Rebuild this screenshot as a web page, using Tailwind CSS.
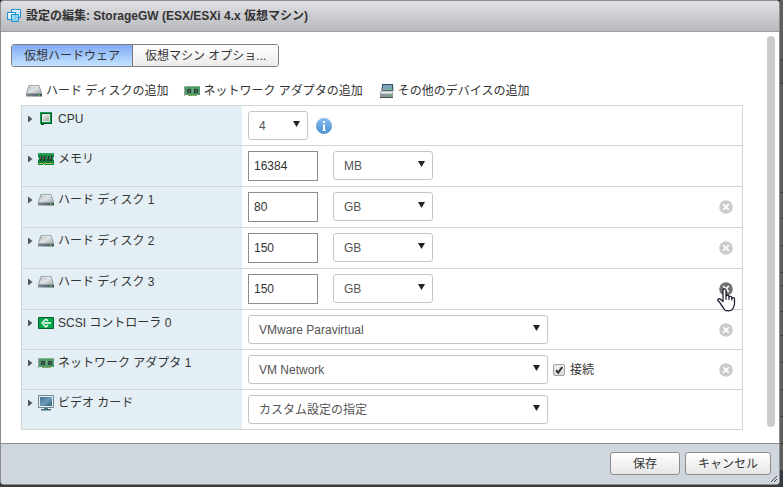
<!DOCTYPE html>
<html lang="ja">
<head>
<meta charset="utf-8">
<meta name="viewport" content="width=device-width, initial-scale=1">
<title>設定の編集</title>
<script src="https://cdn.jsdelivr.net/npm/@tailwindcss/browser@4"></script>
</head>
<body class="flex min-h-screen bg-[#3c3c3c] font-['Liberation_Sans','Noto_Sans_CJK_JP',sans-serif] text-xs text-[#333]">

<!-- Shared icons -->
<svg class="absolute size-0" aria-hidden="true">
  <defs>
    <linearGradient id="g-disk" x1="0" y1="0" x2="1" y2="1"><stop offset="0" stop-color="#aab1b5"/><stop offset=".5" stop-color="#dfe3e5"/><stop offset="1" stop-color="#a3abb0"/></linearGradient>
    <linearGradient id="g-base" x1="0" y1="0" x2="1" y2="0"><stop offset="0" stop-color="#7f8b92"/><stop offset="1" stop-color="#43525b"/></linearGradient>
    <linearGradient id="g-info" x1="0" y1="0" x2="0" y2="1"><stop offset="0" stop-color="#86bcf2"/><stop offset="1" stop-color="#4a8fd0"/></linearGradient>
    <linearGradient id="g-scr" x1="0" y1="0" x2="1" y2="1"><stop offset="0" stop-color="#3b6e90"/><stop offset=".5" stop-color="#6d9dbb"/><stop offset="1" stop-color="#2f5f80"/></linearGradient>
    <linearGradient id="g-chip" x1="0" y1="0" x2="1" y2="1"><stop offset="0" stop-color="#ecece9"/><stop offset="1" stop-color="#a3a4a2"/></linearGradient>
  </defs>
  <symbol id="i-disk" viewBox="0 0 16 16">
    <path d="M3 2.500h10l2.600 8H.4z" fill="url(#g-disk)" stroke="#828b90" stroke-width=".8"/>
    <path d="M3.600 3.300h8.800" stroke="#f2f4f5" stroke-width=".8"/>
    <path d="M0 10h16v3.600H0z" fill="url(#g-base)"/>
    <path d="M0 10.300h16" stroke="#c4cacd" stroke-width=".7"/>
    <path d="M12 11.400h1.600v1.400H12z" fill="#6fe04e"/>
  </symbol>
  <symbol id="i-cpu" viewBox="0 0 16 16">
    <path d="M2 1h12v12H6v1H3v-1H2z" fill="#065c29"/>
    <path d="M2 1h12v1H3v11H2z" fill="#1f9b51"/>
    <path d="M4 3h8v8H4z" fill="#d9f0df"/>
    <path d="M5 4h6v6H5z" fill="url(#g-chip)"/>
    <path d="M12 3h1v9H4v-1h8z" fill="#0f8f45"/>
  </symbol>
  <symbol id="i-mem" viewBox="0 0 16 16">
    <path d="M0 2h16v4l-1 1v1l1 1v5H6v-1H5v1H0V9l1-1V7L0 6z" fill="#0c8440"/>
    <path d="M0 2h16v2H0z" fill="#2e9d56"/>
    <path d="M2 5h2v5H2zM5 5h2v5H5zM9 5h2v5H9zM12 5h2v5h-2z" fill="#28352e"/>
    <path d="M2 5h1v3H2zM5 5h1v3H5zM9 5h1v3H9zM12 5h1v3h-1z" fill="#5c6961"/>
    <path d="M1 12.500h4M6 12.500h9" stroke="#b9c23f"/>
  </symbol>
  <symbol id="i-scsi" viewBox="0 0 16 16">
    <path d="M.5 2.500h15v11H.5z" fill="#00a84b" stroke="#075c2b"/>
    <path d="M8 4 4 8l4 4M8 4l2 2M8 12l2-2M6 8h7" fill="none" stroke="#fff" stroke-width="1.300"/>
  </symbol>
  <symbol id="i-net" viewBox="0 0 16 16">
    <path d="M1 3h15v9h-3v1H4v-1H1z" fill="#4f9a68"/>
    <path d="M1 3h15v1H1z" fill="#7fba8f"/>
    <path d="M0 3h1v10H0z" fill="#9aa69e"/>
    <path d="M3 6h4v4H3zM10 6h4v4h-4z" fill="#2c4a39"/>
    <path d="M4 7h2v2H4zM11 7h2v2h-2z" fill="#47604f"/>
    <path d="M8 5h1v5H8z" fill="#79aa87"/>
    <path d="M4 12.500h9" stroke="#b8bd5f" stroke-dasharray="1 1"/>
  </symbol>
  <symbol id="i-video" viewBox="0 0 16 16">
    <path d="M.5.500h15v12H.5z" fill="#e9eef0" stroke="#6d8796"/>
    <path d="M2 2h12v9H2z" fill="url(#g-scr)"/>
    <path d="M6 13h4v1H6z" fill="#4d7288"/><path d="M3 14h10v1.600H3z" fill="#40677f"/>
  </symbol>
  <symbol id="i-other" viewBox="0 0 16 16">
    <path d="M4 1h11l.5 7h-12z" fill="#2f4f62"/>
    <path d="M5 2h9v4H4.700z" fill="#7da3bb"/>
    <path d="M4 6.500h11" stroke="#a8bcc7" stroke-width=".8"/>
    <path d="M3 8h11l1 3H2z" fill="#e5e8e9" stroke="#89949a" stroke-width=".7"/>
    <path d="M2 11h13v4H2z" fill="#8d999f"/><path d="M2 14h13v1H2z" fill="#3e4f59"/>
    <path d="M11.500 5.600H13V7h-1.500zM11.500 12H13v1.400h-1.500z" fill="#35d83e"/>
  </symbol>
  <symbol id="i-x" viewBox="0 0 15 15">
    <circle cx="7.500" cy="7.500" r="7.300" fill="currentColor"/>
    <path d="m4.500 4.500 6 6m0-6-6 6" stroke="#fff" stroke-width="1.800"/>
  </symbol>
  <symbol id="i-tri" viewBox="0 0 5 8"><path d="M0 .5v7L4.500 4z" fill="#555"/></symbol>
  <symbol id="i-down" viewBox="0 0 7 6"><path d="M0 0h7L3.500 6z" fill="#222"/></symbol>
</svg>

<div role="dialog" aria-labelledby="title" class="mb-[2px] flex flex-1 flex-col overflow-hidden rounded-[4px] border border-[#8c8c8c] bg-white">
  <header class="flex h-[31px] items-center gap-1 border-b border-[#9c9da1] bg-linear-to-b from-[#e1e1e5] to-[#b8b9bd] pl-[5px]">
    <svg class="size-4" viewBox="0 0 16 16" aria-hidden="true">
      <g stroke="#1c8fd0"><path d="M5.500 1.500h9v8h-9z" fill="#c5e9fa"/><path d="M1.500 4.500h8v7h-8z" fill="#dff3fc" fill-opacity=".8"/><path d="M5.500 6.500h7v7h-7z" fill="#8fd4f6" fill-opacity=".8"/></g>
      <path d="M6 2.500h8M2 5.500h7" stroke="#fff"/>
    </svg>
    <h1 id="title" class="font-bold">設定の編集: StorageGW (ESX/ESXi 4.x 仮想マシン)</h1>
  </header>

  <div class="flex flex-1">
    <main class="flex-1 pt-3 pr-6 pl-[10px]">
      <div role="tablist" class="inline-flex h-[23px] overflow-hidden rounded-[3px] border border-[#7f7f7f] align-top">
        <button role="tab" aria-selected="true" class="border-r border-[#777] bg-linear-to-b from-[#82abf5] to-[#c3e4ff] px-3">仮想ハードウェア</button>
        <button role="tab" aria-selected="false" class="bg-linear-to-b from-white to-[#ebebeb] px-3">仮想マシン オプショ...</button>
      </div>

      <nav class="mt-3 mb-[2px] ml-[15px] flex h-6 items-center gap-[15px]">
        <a href="#" class="flex items-center gap-1"><svg class="size-4"><use href="#i-disk"/></svg>ハード ディスクの追加</a>
        <a href="#" class="flex items-center gap-1"><svg class="size-4"><use href="#i-net"/></svg>ネットワーク アダプタの追加</a>
        <a href="#" class="flex items-center gap-1"><svg class="size-4"><use href="#i-other"/></svg>その他のデバイスの追加</a>
      </nav>

      <div class="ml-[10px] divide-y divide-[#d3d5d6] border border-[#d3d5d6]">
        <div class="flex">
          <div class="flex w-[220px] items-start bg-[#e4eff5] pt-[5px] pl-[6px]"><span class="flex h-4 items-center gap-1"><svg class="mr-[1px] h-2 w-[5px]"><use href="#i-tri"/></svg><svg class="size-4"><use href="#i-cpu"/></svg><label for="cpu">CPU</label></span></div>
          <div class="flex flex-1 items-center py-[5px] pr-[9px] pl-[6px]">
            <span class="relative"><select id="cpu" class="block h-[29px] w-[60px] appearance-none rounded-[3px] border border-[#c6c6c6] bg-white pl-[10px] text-[#555]"><option>4</option></select><svg class="pointer-events-none absolute top-[10px] right-2 h-[6px] w-[7px]"><use href="#i-down"/></svg></span>
            <button aria-label="情報" class="ml-2"><svg class="size-4" viewBox="0 0 16 16"><circle cx="8" cy="8" r="7.800" fill="url(#g-info)" stroke="#5b9bd8" stroke-width=".4"/><path d="M7 3h2v2H7zM6.500 6.500H9V12h1v1H6.500v-1H7V7.500h-.5z" fill="#fff"/></svg></button>
          </div>
        </div>

        <div class="flex">
          <div class="flex w-[220px] items-start bg-[#e4eff5] pt-[5px] pl-[6px]"><span class="flex h-4 items-center gap-1"><svg class="mr-[1px] h-2 w-[5px]"><use href="#i-tri"/></svg><svg class="size-4"><use href="#i-mem"/></svg><label for="mem">メモリ</label></span></div>
          <div class="flex flex-1 items-start py-[5px] pr-[9px] pl-[6px]">
            <input id="mem" value="16384" class="mr-[15px] h-[30px] w-[70px] border border-[#8c8c8c] px-[5px]">
            <span class="relative"><select aria-label="メモリの単位" class="block h-[29px] w-[100px] appearance-none rounded-[3px] border border-[#c6c6c6] bg-white pl-[10px] text-[#555]"><option>MB</option></select><svg class="pointer-events-none absolute top-[10px] right-2 h-[6px] w-[7px]"><use href="#i-down"/></svg></span>
          </div>
        </div>

        <div class="flex">
          <div class="flex w-[220px] items-start bg-[#e4eff5] pt-[5px] pl-[6px]"><span class="flex h-4 items-center gap-1"><svg class="mr-[1px] h-2 w-[5px]"><use href="#i-tri"/></svg><svg class="size-4"><use href="#i-disk"/></svg><label for="hd1">ハード ディスク 1</label></span></div>
          <div class="flex flex-1 items-start py-[5px] pr-[9px] pl-[6px]">
            <input id="hd1" value="80" class="mr-[15px] h-[30px] w-[70px] border border-[#8c8c8c] px-[5px]">
            <span class="relative"><select aria-label="ハード ディスク 1 の単位" class="block h-[29px] w-[100px] appearance-none rounded-[3px] border border-[#c6c6c6] bg-white pl-[10px] text-[#555]"><option>GB</option></select><svg class="pointer-events-none absolute top-[10px] right-2 h-[6px] w-[7px]"><use href="#i-down"/></svg></span>
            <button aria-label="削除" class="ml-auto self-center text-[#cbcbcb]"><svg class="size-[14px]"><use href="#i-x"/></svg></button>
          </div>
        </div>

        <div class="flex">
          <div class="flex w-[220px] items-start bg-[#e4eff5] pt-[5px] pl-[6px]"><span class="flex h-4 items-center gap-1"><svg class="mr-[1px] h-2 w-[5px]"><use href="#i-tri"/></svg><svg class="size-4"><use href="#i-disk"/></svg><label for="hd2">ハード ディスク 2</label></span></div>
          <div class="flex flex-1 items-start py-[5px] pr-[9px] pl-[6px]">
            <input id="hd2" value="150" class="mr-[15px] h-[30px] w-[70px] border border-[#8c8c8c] px-[5px]">
            <span class="relative"><select aria-label="ハード ディスク 2 の単位" class="block h-[29px] w-[100px] appearance-none rounded-[3px] border border-[#c6c6c6] bg-white pl-[10px] text-[#555]"><option>GB</option></select><svg class="pointer-events-none absolute top-[10px] right-2 h-[6px] w-[7px]"><use href="#i-down"/></svg></span>
            <button aria-label="削除" class="ml-auto self-center text-[#cbcbcb]"><svg class="size-[14px]"><use href="#i-x"/></svg></button>
          </div>
        </div>

        <div class="flex">
          <div class="flex w-[220px] items-start bg-[#e4eff5] pt-[5px] pl-[6px]"><span class="flex h-4 items-center gap-1"><svg class="mr-[1px] h-2 w-[5px]"><use href="#i-tri"/></svg><svg class="size-4"><use href="#i-disk"/></svg><label for="hd3">ハード ディスク 3</label></span></div>
          <div class="flex flex-1 items-start py-[5px] pr-[9px] pl-[6px]">
            <input id="hd3" value="150" class="mr-[15px] h-[30px] w-[70px] border border-[#8c8c8c] px-[5px]">
            <span class="relative"><select aria-label="ハード ディスク 3 の単位" class="block h-[29px] w-[100px] appearance-none rounded-[3px] border border-[#c6c6c6] bg-white pl-[10px] text-[#555]"><option>GB</option></select><svg class="pointer-events-none absolute top-[10px] right-2 h-[6px] w-[7px]"><use href="#i-down"/></svg></span>
            <button aria-label="削除" class="relative ml-auto self-center text-[#727272]"><svg class="size-[14px]"><use href="#i-x"/></svg>
              <!-- Hand pointer over the hovered button -->
              <svg class="pointer-events-none absolute top-[6px] -left-[2px] z-10 h-6 w-[19px]" viewBox="0 0 19 24"><path d="M6 2.200C6 .3 9 .3 9 2.200V8c.3-1.300 2.800-1.300 3 .3V9c.4-1.100 2.600-1 2.800.4v.8c.5-1 2.700-.7 2.700 1V16c0 2-1.500 3.500-1.500 4.500-1.500 3-7.500 3.200-9 .5C6.500 19 4 17.500 3.500 15.500L1 12.500c-.8-1.300 1-2.400 2.200-1.500L6 13.500z" fill="#fff" stroke="#15152a" stroke-width="1.200" stroke-linejoin="round"/><path d="M9 7.500V12M12 8.500V12M14.800 9.800V12.500" stroke="#15152a" stroke-width="1.100"/></svg>
            </button>
          </div>
        </div>

        <div class="flex">
          <div class="flex w-[220px] items-start bg-[#e4eff5] pt-[5px] pl-[6px]"><span class="flex h-4 items-center gap-1"><svg class="mr-[1px] h-2 w-[5px]"><use href="#i-tri"/></svg><svg class="size-4"><use href="#i-scsi"/></svg><label for="scsi">SCSI コントローラ 0</label></span></div>
          <div class="flex flex-1 items-center py-[5px] pr-[9px] pl-[6px]">
            <span class="relative"><select id="scsi" class="block h-[29px] w-[300px] appearance-none rounded-[3px] border border-[#c6c6c6] bg-white pl-[10px] text-[#555]"><option>VMware Paravirtual</option></select><svg class="pointer-events-none absolute top-[10px] right-2 h-[6px] w-[7px]"><use href="#i-down"/></svg></span>
            <button aria-label="削除" class="ml-auto text-[#cbcbcb]"><svg class="size-[14px]"><use href="#i-x"/></svg></button>
          </div>
        </div>

        <div class="flex">
          <div class="flex w-[220px] items-start bg-[#e4eff5] pt-[5px] pl-[6px]"><span class="flex h-4 items-center gap-1"><svg class="mr-[1px] h-2 w-[5px]"><use href="#i-tri"/></svg><svg class="size-4"><use href="#i-net"/></svg><label for="net">ネットワーク アダプタ 1</label></span></div>
          <div class="flex flex-1 items-center py-[5px] pr-[9px] pl-[6px]">
            <span class="relative"><select id="net" class="block h-[29px] w-[300px] appearance-none rounded-[3px] border border-[#c6c6c6] bg-white pl-[10px] text-[#555]"><option>VM Network</option></select><svg class="pointer-events-none absolute top-[10px] right-2 h-[6px] w-[7px]"><use href="#i-down"/></svg></span>
            <label class="ml-[5px] flex items-center gap-[5px]"><span class="relative flex"><input type="checkbox" checked class="size-3 appearance-none rounded-[2px] border border-[#a0a0a0] bg-linear-to-b from-[#f0f0f0] to-[#dcdcdc]"><svg class="pointer-events-none absolute inset-0 size-3" viewBox="0 0 12 12"><path d="m3 6.300 2.200 2.300L9.300 3" fill="none" stroke="#333" stroke-width="2"/></svg></span>接続</label>
            <button aria-label="削除" class="ml-auto text-[#cbcbcb]"><svg class="size-[14px]"><use href="#i-x"/></svg></button>
          </div>
        </div>

        <div class="flex">
          <div class="flex w-[220px] items-start bg-[#e4eff5] pt-[5px] pl-[6px]"><span class="flex h-4 items-center gap-1"><svg class="mr-[1px] h-2 w-[5px]"><use href="#i-tri"/></svg><svg class="size-4"><use href="#i-video"/></svg><label for="video">ビデオ カード</label></span></div>
          <div class="flex flex-1 items-center py-[5px] pr-[9px] pl-[6px]">
            <span class="relative"><select id="video" class="block h-[29px] w-[300px] appearance-none rounded-[3px] border border-[#c6c6c6] bg-white pl-[10px] text-[#555]"><option>カスタム設定の指定</option></select><svg class="pointer-events-none absolute top-[10px] right-2 h-[6px] w-[7px]"><use href="#i-down"/></svg></span>
          </div>
        </div>
      </div>
    </main>
    <div class="mt-1 mr-1 mb-4 w-2 rounded-full bg-[#cbcbcb]"></div>
  </div>

  <footer class="relative flex justify-end gap-[5px] border-t border-[#8c8c8c] bg-[#d0d6dd] px-2 pt-2 pb-[9px]">
    <button class="h-[23px] w-[70px] rounded-[3px] border border-[#8c8c8c] bg-linear-to-b from-white to-[#e6e6e6]">保存</button>
    <button class="h-[23px] w-[86px] rounded-[3px] border border-[#8c8c8c] bg-linear-to-b from-white to-[#e6e6e6]">キャンセル</button>
    <svg class="absolute right-[2px] bottom-[2px] size-[6px]" viewBox="0 0 6 6" aria-hidden="true"><path d="M0 6 6 0M3 6l3-3" stroke="#444"/></svg>
  </footer>
</div>

<!-- Sliver of the dimmed page behind the dialog -->
<div class="flex w-[3px] flex-col divide-y divide-[#3c3c3c] bg-[#5e5f5d]">
  <div class="h-[60px]"></div><div class="h-6 bg-[#53565b]"></div><div class="h-[109px]"></div><div class="h-[26px]"></div><div class="h-[27px]"></div><div class="h-[27px]"></div><div class="h-[13px]"></div><div class="h-[26px]"></div><div class="h-6"></div><div class="h-[27px]"></div><div class="h-[27px]"></div><div class="h-[27px]"></div><div class="h-[27px]"></div><div class="h-[27px]"></div><div class="flex-1 bg-[#353b43]"></div>
</div>
</body>
</html>
